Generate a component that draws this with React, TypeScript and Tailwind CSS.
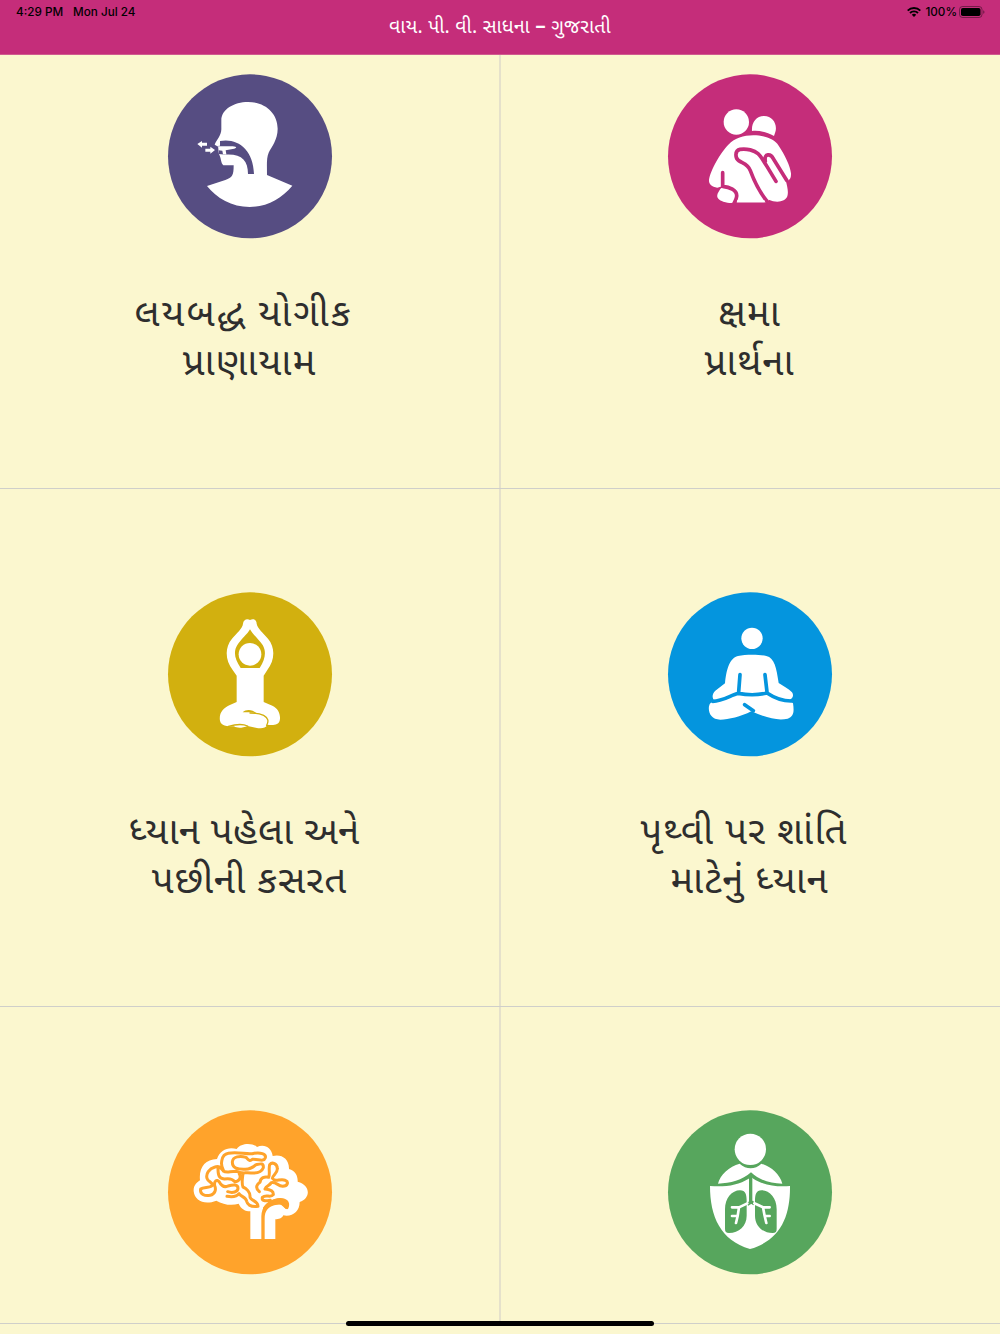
import type { ReactNode } from 'react';

const Disc = ({ color, children }: { color: string; children: ReactNode }) => (
  <svg className="size-[180px] shrink-0" viewBox="0 0 540 540" fill="none" strokeLinecap="round" strokeLinejoin="round">
    <circle cx="270" cy="271" r="246" fill={color} />
    {children}
  </svg>
);

const BreathIcon = () => (
  <Disc color="#564d82">
    <path
      fill="#fff"
      d="M184 163C184 130 222 108 264 108C316 108 353 142 353 188C353 222 334 243 326 260C319 275 321 300 321 327L397 359C365 397 320 423 269 423C216 423 169 396 141 360L196 342C217 335 221 329 221 298H190C182 291 184 277 177 264L174 255L175 242L164 236C170 222 184 208 184 190Z"
    />
    <path fill="#564d82" d="M264 324C264 285 246 264 199 266L176 264L174 240L180 239L180 225C232 215 280 250 282 324Z" />
    <path fill="#fff" d="M174 241H218C232 242 232 247 218 249L197 253L199 264L189 265L187 254L176 253Z" />
    <path fill="#fff" d="M184 268L199 265L204 275H186Z" />
    <path fill="#fff" d="M112 234L126 225V230H141V239H126V245Z" />
    <path fill="#fff" d="M165 252L151 242V248H136V257H151V263Z" />
  </Disc>
);

const ForgiveIcon = () => (
  <Disc color="#c52d7a">
    <circle cx="229" cy="168" r="38" fill="#fff" />
    <path fill="#fff" d="M276 195C274 171 288 150 312 150C339 150 353 176 346 198L342 210C321 198 298 193 276 195Z" />
    <path
      fill="#fff"
      d="M147 342C151 313 183 258 205 236C225 216 250 208 280 208C316 208 343 220 356 239C374 266 391 300 393 322C394 335 389 342 383 344L377 341C382 363 386 377 382 391C376 407 350 412 326 401V409H224C218 412 204 411 190 407C170 401 168 389 176 377L183 365C165 367 145 359 147 342Z"
    />
    <path
      stroke="#c52d7a"
      strokeWidth="11"
      d="M322 407C298 378 281 341 271 314C264 294 250 293 236 284C225 277 224 253 240 250C261 247 283 253 294 263C305 273 313 290 319 298L348 346M316 286C311 260 333 263 340 278L380 343M188 320V361C207 363 232 372 230 391C229 402 224 407 222 413"
    />
    <path stroke="#c52d7a" strokeWidth="5" d="M186 363L173 368" />
    <path stroke="#fff" strokeWidth="6" d="M231 406H314" strokeLinecap="butt" />
  </Disc>
);

const ExerciseIcon = () => (
  <Disc color="#d2b00f">
    <path
      fill="#fff"
      d="M249 119C250 107 261 102 270 108C281 102 290 108 290 119C292 132 310 148 324 164C347 191 344 230 322 258L311 275V354L337 365C356 373 363 394 359 410C356 422 341 425 322 422C316 434 303 434 287 431L263 426C245 433 232 433 222 427C200 427 183 425 180 410C176 388 190 372 208 364L230 354V275L218 258C196 230 193 191 216 164C230 148 248 132 249 119Z"
    />
    <path fill="#d2b00f" d="M270 136C277 150 298 168 308 183C319 202 317 224 299 252H242C223 224 220 202 232 183C242 167 263 150 270 136Z" />
    <circle cx="270" cy="211" r="34" fill="#fff" />
    <path stroke="#d2b00f" strokeWidth="4" d="M270 387C288 387 300 389 311 394C326 402 326 413 320 424M205 427C230 420 250 420 263 426" />
    <path fill="#d2b00f" d="M248 385C259 374 279 377 289 388C272 384 260 384 248 385Z" />
  </Disc>
);

const PeaceIcon = () => (
  <Disc color="#0495de">
    <circle cx="276" cy="163" r="32" fill="#fff" />
    <path
      fill="#fff"
      d="M234 216C257 211 297 211 319 216C344 222 349 251 356 297C370 307 386 314 396 325C403 335 397 344 389 347L399 358C403 384 401 397 383 404C350 411 317 400 274 382C242 398 206 407 181 407C153 407 144 385 147 367C149 357 155 353 164 352C155 342 156 329 166 320L195 298C199 260 207 223 234 216Z"
    />
    <path stroke="#0495de" strokeWidth="11" d="M240 272L236 324M315 272L321 324M158 352C189 352 211 334 235 328C264 334 296 333 321 327C342 341 371 352 397 351M254 362L280 380" />
  </Disc>
);

const BrainIcon = () => (
  <Disc color="#ffa32b">
    <path
      fill="#fff"
      d="M101 268C100 252 108 243 120 235C116 197 135 172 171 171C180 144 204 134 230 141C244 121 279 123 291 135C312 124 335 136 338 162C364 155 388 170 387 201C406 206 414 222 413 239C451 248 454 289 419 300C419 329 397 345 370 340C365 350 356 352 346 352V411H314V350C314 327 324 316 343 310C360 305 370 307 376 320L384 318C386 293 369 284 345 291C322 298 305 314 304 343V411H271V328C256 328 243 321 236 305C215 312 190 308 169 296C133 310 104 296 101 268Z"
    />
    <path
      stroke="#ffa32b"
      strokeWidth="9"
      d="M190 204C181 190 182 158 205 154C232 148 259 158 277 155C302 149 319 157 316 167C311 181 296 171 277 172C269 179 266 174 258 166C241 161 218 163 217 180C217 203 241 201 256 202C272 201 279 196 288 188C302 185 311 182 310 197C305 210 289 214 273 213C255 211 242 216 229 208C208 208 199 214 190 207C183 198 178 190 165 195C147 200 137 215 141 229C145 242 157 238 157 250C150 259 131 254 122 261C119 276 134 283 150 280C166 276 169 262 164 251C162 237 170 230 178 240C184 251 191 258 204 252C219 248 234 246 234 259C234 270 218 274 203 269M174 199C174 217 175 229 193 231C209 228 218 231 224 239C236 239 245 228 238 216M249 213C247 234 244 245 249 255C259 259 271 270 270 284C269 297 293 293 294 313C276 315 263 309 260 298C258 285 244 285 237 275C230 285 214 285 201 283M298 269C282 255 294 245 300 241C302 227 313 223 326 226C331 214 325 202 329 188C337 178 352 186 352 200C353 214 337 220 337 229C346 244 360 227 376 235C387 240 383 252 368 253C353 251 346 238 334 242C327 253 319 250 315 261C326 262 341 266 340 278C332 289 318 276 307 286C304 299 319 296 331 295"
    />
    <path fill="#ffa32b" d="M309 317C328 290 363 280 382 295C390 303 388 314 384 321C376 324 370 312 361 307C342 305 324 314 309 326Z" />
  </Disc>
);

const LungsIcon = () => (
  <Disc color="#57a65d">
    <circle cx="271" cy="142" r="47" fill="#fff" />
    <path fill="#fff" d="M174 245C180 218 208 193 239 185C259 203 285 203 304 185C334 194 360 218 367 245C329 244 297 234 273 211C247 235 211 244 174 245Z" />
    <path fill="#fff" d="M150 252C196 256 235 249 266 230L273 224L280 230C310 249 350 256 390 252C391 342 363 414 270 441C181 415 150 343 150 252Z" />
    <path stroke="#57a65d" strokeWidth="10" strokeLinecap="butt" d="M272 218V301L262 307M272 298L283 306" />
    <path fill="#57a65d" d="M195 322C195 288 216 265 240 265C257 265 260 278 260 298V341C260 372 237 393 207 393C198 393 195 389 195 380ZM350 322C350 288 329 265 305 265C288 265 285 278 285 298V341C285 372 308 393 338 393C347 393 350 389 350 380Z" />
    <path stroke="#fff" strokeWidth="8" d="M262 304L237 316H216M237 316L233 342H216M233 342L228 363M283 304L309 316H329M309 316L314 342H329M314 342L319 363" />
  </Disc>
);

const rows = [
  [
    { icon: <BreathIcon />, lines: ['લયબદ્ધ યોગીક ', 'પ્રાણાયામ'], first: 'tracking-[2px]' },
    { icon: <ForgiveIcon />, lines: ['ક્ષમા', 'પ્રાર્થના'] }
  ],
  [
    { icon: <ExerciseIcon />, lines: ['ધ્યાન પહેલા અને ', 'પછીની કસરત'], first: 'tracking-[0.4px]' },
    { icon: <PeaceIcon />, lines: ['પૃથ્વી પર શાંતિ ', 'માટેનું ધ્યાન'] }
  ],
  [
    { icon: <BrainIcon />, lines: [] },
    { icon: <LungsIcon />, lines: [] }
  ]
];

const StatusBar = () => (
  <div className="absolute inset-x-0 top-0 flex h-6 items-center justify-between pr-[15px] pl-4 font-['Inter','Liberation_Sans',sans-serif] text-[11.7px] font-medium tracking-normal text-black">
    <div className="flex gap-[10px]">
      <span>4:29 PM</span>
      <span>Mon Jul 24</span>
    </div>
    <div className="flex items-center">
      <svg className="mr-1 h-[10px] w-[14px]" viewBox="0 0 14 10" fill="none" stroke="#000" strokeWidth="1.9">
        <path d="M.7 3.6C4.2.2 9.8.2 13.3 3.6M3 6C5.2 3.8 8.8 3.8 11 6" />
        <path fill="#000" stroke="none" d="M4.8 7.7C6 6.5 8 6.5 9.2 7.7L7 9.9Z" />
      </svg>
      <span>100%</span>
      <svg className="ml-[2px] h-3 w-[26px]" viewBox="0 0 26 12">
        <rect x=".5" y=".5" width="22.5" height="11" rx="3" fill="none" stroke="#000" strokeOpacity=".4" />
        <rect x="2" y="2" width="19.5" height="8" rx="1.8" />
        <path d="M24.3 4.2C25.8 4.7 25.8 7.3 24.3 7.8Z" fillOpacity=".5" />
      </svg>
    </div>
  </div>
);

const App = () => (
  <div className="relative flex h-[1334px] w-[1000px] flex-col overflow-hidden bg-[#fbf7cf] font-['Noto_Sans_Gujarati','Noto_Sans',sans-serif]">
    <header className="flex h-[55px] shrink-0 justify-center border-b border-[#d05a8f] bg-[#c52d7a] pt-[14px] text-[19.5px] leading-[30px] tracking-[0.2px] text-white">
      <h1>
        વાય. પી. વી. સાધના <span className="text-[21px] leading-none font-semibold">–</span> ગુજરાતી
      </h1>
      <StatusBar />
    </header>

    <main className="flex h-[1269px] shrink-0 flex-col overflow-hidden border-b border-[#cfcfca]">
      {rows.map((row, i) => (
        <section
          key={i}
          className="flex h-[518px] shrink-0 border-b border-[#cfcfca] first:h-[434px] last:h-[316px] last:border-b-0"
        >
          {row.map((tile, j) => (
            <div
              key={j}
              className={`flex w-1/2 flex-col items-center border-[#e5e1cb] ${i === 0 ? 'pt-[11px]' : 'pt-[95px]'} ${j === 0 ? 'border-r' : 'border-l pr-[2px]'}`}
            >
              {tile.icon}
              <div className="mt-[47px] text-center text-[38.5px] leading-[49px] tracking-[0.95px] whitespace-pre text-[#2e2e2e]">
                {tile.lines.map((line, k) => (
                  <p key={line} className={k === 0 ? tile.first : undefined}>
                    {line}
                  </p>
                ))}
              </div>
            </div>
          ))}
        </section>
      ))}
    </main>

    <div className="absolute top-[1321px] left-[346px] h-[5px] w-[308px] rounded-full bg-black" />
  </div>
);

export default App;
